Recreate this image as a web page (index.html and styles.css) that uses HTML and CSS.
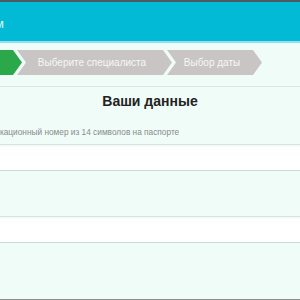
FILE: index.html
```html
<!DOCTYPE html>
<html lang="ru">
<head>
<meta charset="utf-8">
<title>Ваши данные</title>
<link rel="stylesheet" href="styles.css">
</head>
<body>
<div class="page">
  <header class="topbar">
    <div class="brand"><span class="brand-text">Запись на приём</span></div>
  </header>
  <nav class="steps">
    <div class="step step-done"></div>
    <div class="step step-next step-wide">Выберите специалиста</div>
    <div class="step step-next step-narrow">Выбор даты</div>
  </nav>
  <hr class="divider">
  <h1 class="heading">Ваши данные</h1>
  <div class="field">
    <label class="field-label">Идентификационный номер из 14 символов на паспорте</label>
    <div class="field-input"></div>
  </div>
  <div class="field field-second">
    <div class="field-input"></div>
  </div>
</div>
</body>
</html>
```
FILE: styles.css
```css
html, body {
  margin: 0;
  padding: 0;
}
body {
  height: 299px;
  border-bottom: 1px solid #8d8d8d;
  background: #effcf7;
  overflow: hidden;
  font-family: "Liberation Sans", Arial, sans-serif;
}
.page {
  width: 420px;
  margin-left: -60px;
  border-top: 2px solid #4f5a5e;
}
.topbar {
  height: 39px;
  background: #02b9d6;
  border-bottom: 2px solid #8fe2ec;
  display: flex;
  align-items: center;
}
.brand {
  width: 64px;
  display: flex;
  justify-content: flex-end;
  white-space: nowrap;
}
.brand-text {
  color: #d9f6fa;
  font-size: 13px;
  line-height: 16px;
  padding-top: 5px;
}
.steps {
  display: flex;
  height: 25px;
  margin-top: 7px;
  padding-left: 15px;
}
.step {
  height: 25px;
  display: flex;
  align-items: center;
  justify-content: center;
  color: #f7f7f7;
  font-size: 10px;
  white-space: nowrap;
  clip-path: polygon(0 0, calc(100% - 9px) 0, 100% 50%, calc(100% - 9px) 100%, 0 100%, 9px 50%);
  box-sizing: border-box;
  padding: 0 14px 0 9px;
}
.step + .step {
  margin-left: -5px;
}
.step-done {
  width: 67px;
  background: #2aa84a;
}
.step-next {
  background: #c9c5c5;
}
.step-wide {
  width: 155px;
}
.step-narrow {
  width: 95px;
}
.divider {
  margin: 11px 0 0;
  border: 0;
  border-top: 1px solid #dbe7e7;
  height: 0;
}
.heading {
  margin: 4px 0 0;
  text-align: center;
  font-size: 14px;
  line-height: 20px;
  font-weight: 700;
  color: #222;
}
.field {
  display: flex;
  flex-direction: column;
}
.field-label {
  margin-top: 15px;
  padding-left: 20px;
  font-size: 8.3px;
  line-height: 12px;
  color: #8a8a8a;
  white-space: nowrap;
}
.field-input {
  margin-top: 6px;
  height: 25px;
  background: #fff;
  border-top: 1px solid #d6e3e5;
  border-bottom: 1px solid #c9d9dc;
  box-shadow: inset 0 1px 2px rgba(0, 0, 0, 0.05);
}
.field-second .field-input {
  margin-top: 45px;
}
```
